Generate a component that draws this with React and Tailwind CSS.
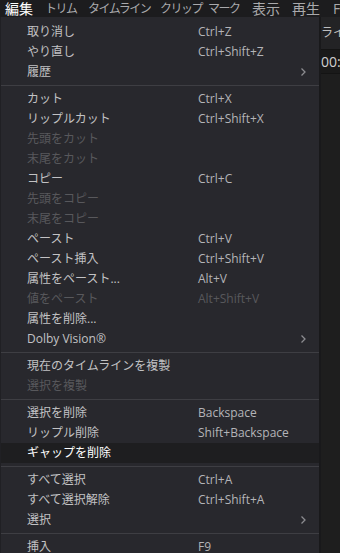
import React from 'react';

const FONT = { fontFamily: '"Open Sans", "Noto Sans CJK JP", sans-serif' };

const topMenu = [
  { label: '編集', w: 'w-[40px]', active: true },
  { label: 'トリム', w: 'w-[43px]' },
  { label: 'タイムライン', w: 'w-[72px]' },
  { label: 'クリップ', w: 'w-[48px]' },
  { label: 'マーク', w: 'w-[44px]' },
  { label: '表示', w: 'w-[40px]', kanji: true },
  { label: '再生', w: 'w-[41px]', kanji: true },
  { label: 'F', w: 'w-[20px]', kanji: true },
];

const items = [
  { label: '取り消し', key: 'Ctrl+Z' },
  { label: 'やり直し', key: 'Ctrl+Shift+Z' },
  { label: '履歴', sub: true },
  'sep',
  { label: 'カット', key: 'Ctrl+X' },
  { label: 'リップルカット', key: 'Ctrl+Shift+X' },
  { label: '先頭をカット', off: true },
  { label: '末尾をカット', off: true },
  { label: 'コピー', key: 'Ctrl+C' },
  { label: '先頭をコピー', off: true },
  { label: '末尾をコピー', off: true },
  { label: 'ペースト', key: 'Ctrl+V' },
  { label: 'ペースト挿入', key: 'Ctrl+Shift+V' },
  { label: '属性をペースト...', key: 'Alt+V' },
  { label: '値をペースト', key: 'Alt+Shift+V', off: true },
  { label: '属性を削除...' },
  { label: 'Dolby Vision®', sub: true },
  'sep',
  { label: '現在のタイムラインを複製' },
  { label: '選択を複製', off: true },
  'sep',
  { label: '選択を削除', key: 'Backspace' },
  { label: 'リップル削除', key: 'Shift+Backspace' },
  { label: 'ギャップを削除', hover: true },
  'sep',
  { label: 'すべて選択', key: 'Ctrl+A' },
  { label: 'すべて選択解除', key: 'Ctrl+Shift+A' },
  { label: '選択', sub: true },
  'sep',
  { label: '挿入', key: 'F9' },
];

const Chevron = () => (
  <svg width="7" height="10" viewBox="0 0 7 10" className="text-[#8c8c90]">
    <polyline points="1.5,1.5 5,5 1.5,8.5" fill="none" stroke="currentColor" strokeWidth="1.3" />
  </svg>
);

const MenuRow = ({ item }) => {
  const color = item.hover ? 'text-white' : item.off ? 'text-[#58585c]' : 'text-[#c2c2c4]';
  return (
    <div className={`flex items-center h-5 pl-[26px] pr-[12px] text-[12px] ${color} ${item.hover ? 'bg-[#1e1e20]' : ''}`}>
      <span className="w-[171px] whitespace-nowrap">{item.label}</span>
      <span className={`flex-1 whitespace-nowrap ${item.off ? 'text-[#58585c]' : 'text-[#b4b4b8]'}`}>{item.key}</span>
      {item.sub && <Chevron />}
    </div>
  );
};

export default function App() {
  return (
    <div className="w-[340px] h-[553px] overflow-hidden bg-[#1c1c1c] flex flex-col" style={FONT}>
      <div className="h-[17px] bg-[#1c1c1e] flex items-center pl-[5px] text-[#a9a9ac] shrink-0 overflow-hidden">
        {topMenu.map((m) => (
          <span
            key={m.label}
            className={`${m.w} shrink-0 whitespace-nowrap ${
              m.active ? 'text-white text-[14px]' : m.kanji ? 'text-[14px]' : 'text-[12px] tracking-[-1.5px]'
            }`}
          >
            {m.label}
          </span>
        ))}
      </div>
      <div className="flex flex-1 min-h-0">
        <div className="w-[321px] shrink-0 bg-[#28282d] border-l border-[#202024] pt-[5px] border-r-2 border-r-[#19191b]">
          {items.map((item, i) =>
            item === 'sep' ? (
              <div key={i} className="h-[7px] flex items-center">
                <div className="h-px w-full bg-[#3e3e43]" />
              </div>
            ) : (
              <MenuRow key={i} item={item} />
            )
          )}
        </div>
        <div className="flex-1 flex flex-col overflow-hidden">
          <div className="h-[33px] bg-[#232325] flex items-center text-[12px] text-[#bdbdbd] whitespace-nowrap border-b border-[#141414]">ライ</div>
          <div className="h-[24px] bg-[#1a1a1a] flex items-center text-[14px] text-[#d0d0d0] whitespace-nowrap border-b border-[#141414]">00:0</div>
          <div className="flex-1 bg-[#1e1e1e]" />
        </div>
      </div>
    </div>
  );
}
